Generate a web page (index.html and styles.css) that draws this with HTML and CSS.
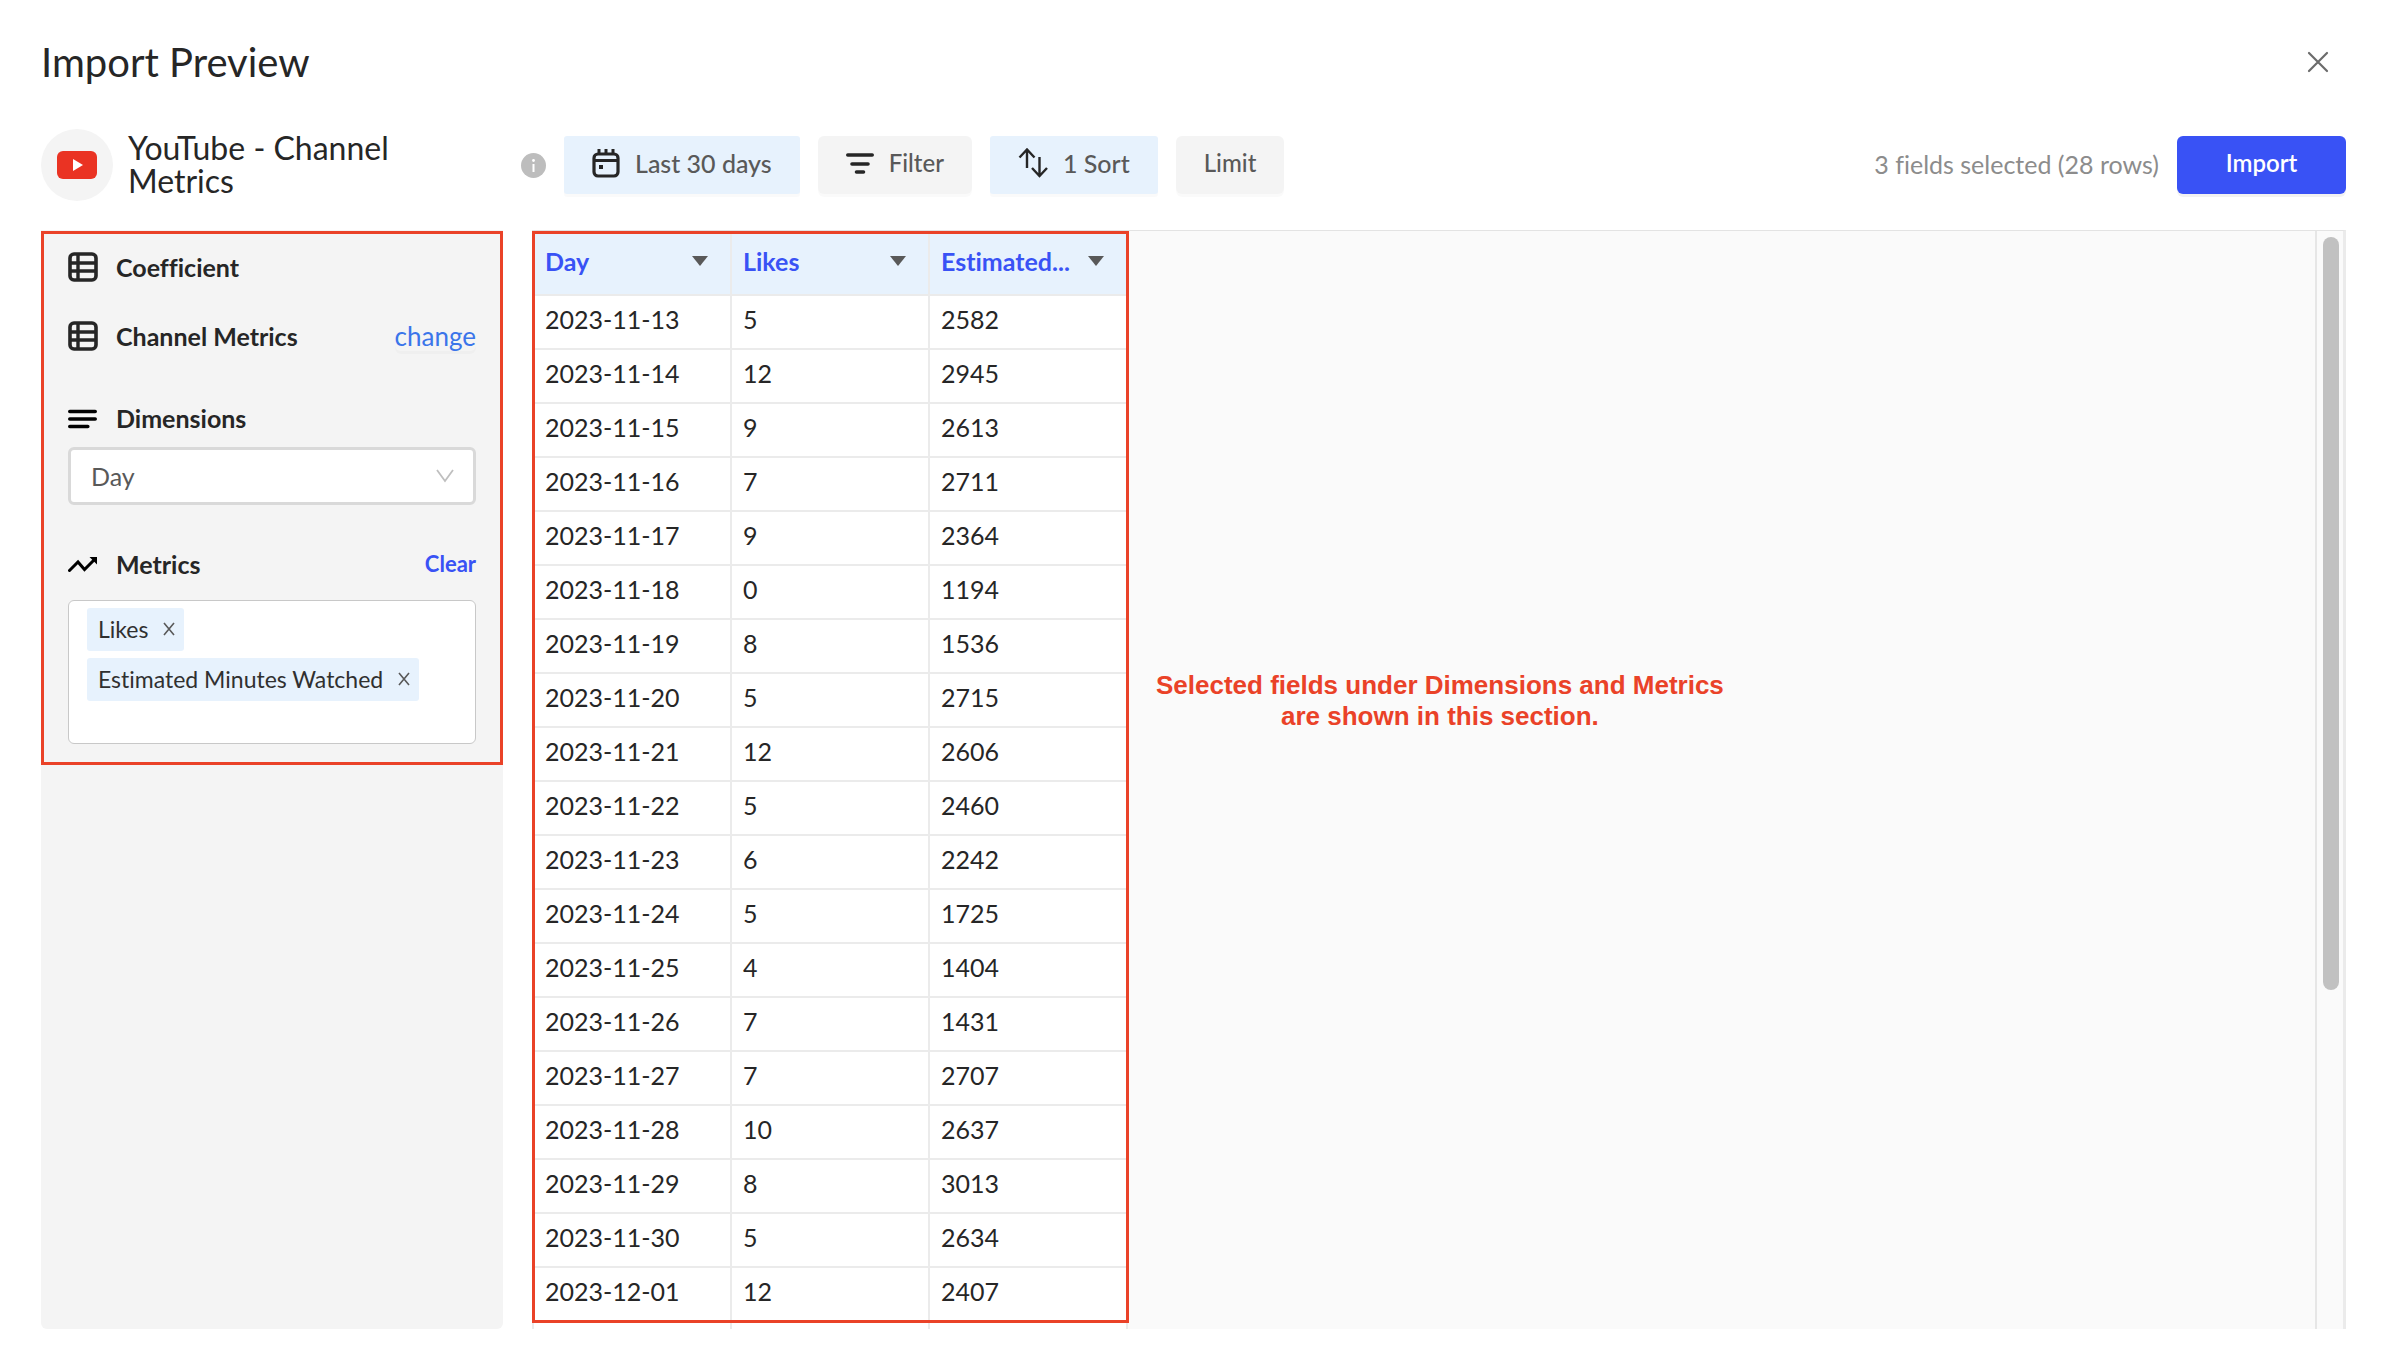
FILE: index.html
```html
<!DOCTYPE html>
<html lang="en">
<head>
<meta charset="utf-8">
<title>Import Preview</title>
<link rel="stylesheet" href="styles.css">
</head>
<body>
<svg width="0" height="0" class="sprite" aria-hidden="true">
  <symbol id="icon-table" viewBox="0 0 30 30">
    <rect x="2" y="2" width="26" height="26" rx="4" fill="none" stroke="currentColor" stroke-width="3.600"/>
    <path d="M2 11h26M2 19h26M10 2v26" fill="none" stroke="currentColor" stroke-width="3.400"/>
  </symbol>
  <symbol id="icon-x" viewBox="0 0 12 14">
    <path d="M1 1l10 12M11 1L1 13" fill="none" stroke="currentColor" stroke-width="1.600"/>
  </symbol>
  <symbol id="icon-caret" viewBox="0 0 16 10">
    <path d="M0 0h16l-8 10z" fill="currentColor"/>
  </symbol>
</svg>
<main class="modal">
  <header class="title-bar">
    <h1>Import Preview</h1>
    <button class="close" type="button" aria-label="Close">
      <svg width="22" height="22" viewBox="0 0 22 22"><path d="M2 2l18 18M20 2L2 20" stroke="currentColor" stroke-width="2.200" stroke-linecap="round"/></svg>
    </button>
  </header>

  <div class="toolbar">
    <div class="source">
      <span class="logo">
        <svg width="40" height="28" viewBox="0 0 40 28"><rect width="40" height="28" rx="6" fill="#ea3323"/><path d="M16 8l10 6-10 6z" fill="#fff"/></svg>
      </span>
      <h2>YouTube - Channel Metrics</h2>
      <svg class="info" width="25" height="25" viewBox="0 0 25 25"><circle cx="12.500" cy="12.500" r="12.500" fill="#bdbdbd"/><circle cx="12.500" cy="7.500" r="1.400" fill="#fff"/><path d="M12.500 11v8" stroke="#fff" stroke-width="2"/></svg>
    </div>
    <div class="actions">
      <button class="btn active" type="button">
        <svg width="28" height="30" viewBox="0 0 28 30"><rect x="2" y="6" width="24" height="22" rx="4" fill="none" stroke="currentColor" stroke-width="3.200"/><path d="M2 12.500h24" stroke="currentColor" stroke-width="3"/><path d="M7 1v5M14 1v5M21 1v5" stroke="currentColor" stroke-width="3"/><path d="M7 17h4v4h-4z" fill="currentColor"/></svg>
        Last 30 days
      </button>
      <button class="btn" type="button">
        <svg width="28" height="30" viewBox="0 0 28 30"><path d="M1.800 7h24.400M6 16h16M10.500 24h7" stroke="currentColor" stroke-width="3.600" stroke-linecap="round"/></svg>
        Filter
      </button>
      <button class="btn active" type="button">
        <svg width="30" height="30" viewBox="0 0 30 30"><path d="M9 20V2M1.500 9.500L9 1.500l7.500 8M21.500 9v19M14 20l7.500 8L29 20" fill="none" stroke="currentColor" stroke-width="2.400"/></svg>
        1 Sort
      </button>
      <button class="btn" type="button">Limit</button>
    </div>
    <p class="status">3 fields selected (28 rows)</p>
    <button class="btn primary" type="button">Import</button>
  </div>

  <div class="content">
    <aside class="sidebar">
      <section class="fields">
        <div class="field-row">
          <svg width="30" height="30"><use href="#icon-table"/></svg>
          <h3>Coefficient</h3>
        </div>
        <div class="field-row report">
          <svg width="30" height="30"><use href="#icon-table"/></svg>
          <h3>Channel Metrics</h3>
          <a class="change" href="#">change</a>
        </div>
        <div class="field-row dimensions">
          <svg class="dark" width="30" height="30" viewBox="0 0 30 30"><path d="M1.800 8.500h25.400M1.800 16h25.400M1.800 23.500h18" stroke="currentColor" stroke-width="3.600" stroke-linecap="round"/></svg>
          <label for="dimension">Dimensions</label>
        </div>
        <div class="select">
          <select id="dimension"><option>Day</option></select>
          <svg width="18" height="14" viewBox="0 0 18 14"><path d="M1 1l8 11 8-11" fill="none" stroke="currentColor" stroke-width="1.800"/></svg>
        </div>
        <div class="field-row metrics">
          <svg class="dark" width="30" height="30" viewBox="0 0 30 30"><path d="M1.500 21.500l8.500-8.500 6.500 7.500L27 10" fill="none" stroke="currentColor" stroke-width="3" stroke-linecap="round"/><path d="M21.500 8H29v7.500z" fill="currentColor"/></svg>
          <h3>Metrics</h3>
          <button class="clear" type="button">Clear</button>
        </div>
        <ul class="tags">
          <li>Likes <button type="button" aria-label="Remove Likes"><svg width="12" height="14"><use href="#icon-x"/></svg></button></li>
          <li>Estimated Minutes Watched <button type="button" aria-label="Remove Estimated Minutes Watched"><svg width="12" height="14"><use href="#icon-x"/></svg></button></li>
        </ul>
      </section>
    </aside>

    <section class="preview">
      <div class="table-wrap">
        <table>
          <thead>
            <tr>
              <th scope="col"><div class="head"><span>Day</span><svg width="16" height="10"><use href="#icon-caret"/></svg></div></th>
              <th scope="col"><div class="head"><span>Likes</span><svg width="16" height="10"><use href="#icon-caret"/></svg></div></th>
              <th scope="col"><div class="head"><span>Estimated...</span><svg width="16" height="10"><use href="#icon-caret"/></svg></div></th>
            </tr>
          </thead>
          <tbody>
            <tr><td>2023-11-13</td><td>5</td><td>2582</td></tr>
            <tr><td>2023-11-14</td><td>12</td><td>2945</td></tr>
            <tr><td>2023-11-15</td><td>9</td><td>2613</td></tr>
            <tr><td>2023-11-16</td><td>7</td><td>2711</td></tr>
            <tr><td>2023-11-17</td><td>9</td><td>2364</td></tr>
            <tr><td>2023-11-18</td><td>0</td><td>1194</td></tr>
            <tr><td>2023-11-19</td><td>8</td><td>1536</td></tr>
            <tr><td>2023-11-20</td><td>5</td><td>2715</td></tr>
            <tr><td>2023-11-21</td><td>12</td><td>2606</td></tr>
            <tr><td>2023-11-22</td><td>5</td><td>2460</td></tr>
            <tr><td>2023-11-23</td><td>6</td><td>2242</td></tr>
            <tr><td>2023-11-24</td><td>5</td><td>1725</td></tr>
            <tr><td>2023-11-25</td><td>4</td><td>1404</td></tr>
            <tr><td>2023-11-26</td><td>7</td><td>1431</td></tr>
            <tr><td>2023-11-27</td><td>7</td><td>2707</td></tr>
            <tr><td>2023-11-28</td><td>10</td><td>2637</td></tr>
            <tr><td>2023-11-29</td><td>8</td><td>3013</td></tr>
            <tr><td>2023-11-30</td><td>5</td><td>2634</td></tr>
            <tr><td>2023-12-01</td><td>12</td><td>2407</td></tr>
            <tr class="next"><td></td><td></td><td></td></tr>
          </tbody>
        </table>
      </div>
      <p class="note">Selected fields under Dimensions and Metrics<br>are shown in this section.</p>
      <div class="scrollbar"><div class="thumb"></div></div>
    </section>
  </div>
</main>
</body>
</html>
```
FILE: styles.css
```css
* { box-sizing: border-box; }

body {
  margin: 0;
  background: #fff;
  color: #262626;
  font: 25px/30px Lato, "Open Sans", sans-serif;
  font-variant-ligatures: none;
}

h1, h2, h3, p, ul { margin: 0; padding: 0; font-weight: 400; }
button, select { font: inherit; color: inherit; border: 0; background: none; padding: 0; margin: 0; }
button { cursor: pointer; }
svg { display: block; flex: none; }
.sprite { position: absolute; }

.modal {
  display: flex;
  flex-direction: column;
  height: 100vh;
  padding: 38px 38px 35px 41px;
}

.title-bar {
  display: flex;
  justify-content: space-between;
  align-items: center;
  margin-bottom: 43px;
}
.title-bar h1 { font-size: 40px; line-height: 48px; }
.close { color: #6b6b6b; padding: 0 17px; }

.toolbar {
  display: flex;
  align-items: center;
  gap: 18px;
  margin-bottom: 29px;
}
.source { display: flex; align-items: center; width: 505px; }
.logo {
  display: grid;
  place-items: center;
  width: 72px;
  height: 72px;
  border-radius: 50%;
  background: #f4f4f4;
}
.source h2 {
  width: 300px;
  margin-left: 15px;
  font-size: 32px;
  line-height: 33px;
  padding-bottom: 2px;
}
.info { margin-left: auto; }

.actions { display: flex; gap: 18px; }
.btn {
  display: flex;
  align-items: center;
  justify-content: center;
  gap: 15px;
  height: 58px;
  padding: 0 28px 4px;
  border-radius: 6px;
  background: #f4f4f4;
  color: #595959;
  font-size: 24px;
  font-weight: 500;
  box-shadow: 0 3px 0 rgba(0, 0, 0, .02);
}
.btn svg { color: #262626; }
.btn.active { padding: 0 28px 4px; background: #e7f2fd; border-radius: 3px; font-size: 25px; }
.btn.primary {
  width: 169px;
  background: #3952f5;
  color: #fff;
  font-weight: 600;
  box-shadow: 0 3px 0 rgba(0, 0, 0, .05);
}
.status { margin-left: auto; color: #8c8c8c; padding-bottom: 2px; }

.content { flex: 1; display: flex; gap: 29px; min-height: 0; }

.sidebar {
  width: 462px;
  flex: none;
  padding-top: 1px;
  border-radius: 0 0 6px 6px;
  background: #f4f4f4;
}
.fields { border: 3px solid #ea4228; padding: 18px 24px; }
.field-row { display: flex; align-items: center; font-weight: 700; }
.field-row h3, .field-row label { margin-left: 18px; font-size: 25px; font-weight: 700; }
.field-row .dark { color: #000; }
.report { margin-top: 39px; }
.dimensions { margin-top: 52px; }
.metrics { margin-top: 44px; }
.change {
  margin-left: auto;
  color: #3b75ea;
  font-size: 26px;
  font-weight: 400;
  text-decoration: none;
  border-radius: 6px;
  box-shadow: 0 3px 0 rgba(0, 0, 0, .02);
}
.clear { margin-left: auto; color: #3952f5; font-size: 22px; font-weight: 700; }

.select { display: grid; align-items: center; margin-top: 14px; }
.select select, .select svg { grid-area: 1 / 1; }
.select select {
  appearance: none;
  width: 100%;
  height: 58px;
  padding: 0 20px;
  border: 3px solid #d9d9d9;
  border-radius: 6px;
  background: #fff;
  color: #595959;
}
.select svg { justify-self: end; margin-right: 22px; color: #bfbfbf; pointer-events: none; }

.tags {
  display: flex;
  flex-direction: column;
  align-items: flex-start;
  gap: 7px;
  height: 144px;
  margin-top: 21px;
  padding: 7px 18px;
  border: 1px solid #c8c8c8;
  border-radius: 6px;
  background: #fff;
  list-style: none;
}
.tags li {
  display: flex;
  align-items: center;
  gap: 15px;
  height: 43px;
  padding: 0 9px 2px 11px;
  border-radius: 3px;
  background: #e7f2fd;
  color: #303030;
  font-size: 23px;
}
.tags button { color: #595959; }

.preview {
  flex: 1;
  display: flex;
  min-width: 0;
  overflow: hidden;
  border-top: 1px solid #e3e3e3;
  border-right: 3px solid #ebebeb;
  background: #fafafa;
}
.table-wrap { position: relative; flex: none; width: 597px; overflow: hidden; }
.table-wrap::after {
  content: "";
  position: absolute;
  inset: 0 0 6px;
  border: 3px solid #ea4228;
}
table { width: 596px; table-layout: fixed; border-collapse: separate; border-spacing: 0; background: #fff; border-left: 2px solid #ebebeb; }
th, td { padding: 0 0 4px 11px; border-right: 2px solid #ebebeb; border-bottom: 2px solid #ebebeb; text-align: left; }
th { height: 65px; background: #e7f2fd; color: #3952f5; font-weight: 700; }
td { height: 54px; padding-bottom: 6px; }
.head { display: flex; align-items: center; justify-content: space-between; padding-right: 22px; }
.head svg { color: #595959; }

.note {
  align-self: flex-start;
  margin: 439px 0 0 27px;
  color: #ea4228;
  font: 700 26px/31px "Liberation Sans", Arial, sans-serif;
  text-align: center;
}

.scrollbar {
  width: 28px;
  margin-left: auto;
  padding: 6px 0 0 6px;
  border-left: 2px solid #e6e6e6;
}
.thumb { width: 16px; height: 69%; border-radius: 8px; background: #c1c1c1; }
```
